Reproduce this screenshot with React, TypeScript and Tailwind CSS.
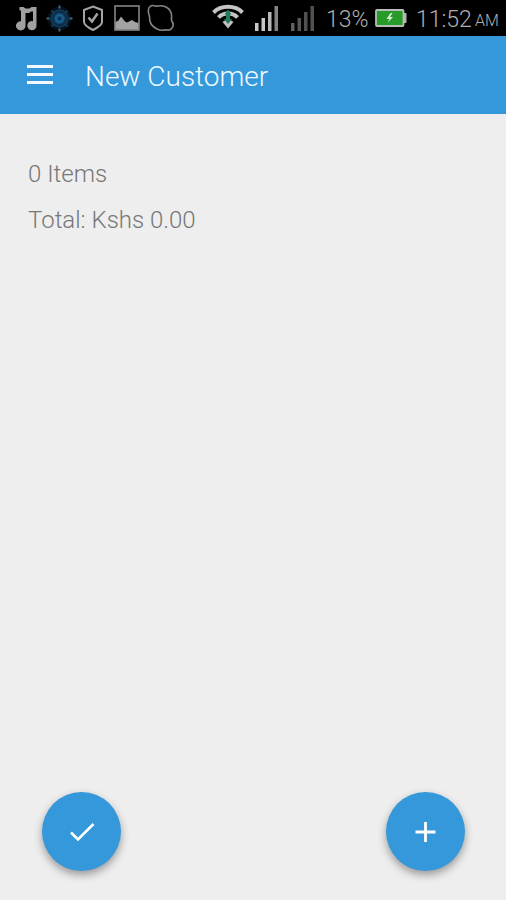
import type { ReactNode } from "react";

const MusicIcon = () => (
  <svg width="24" height="25" viewBox="0 0 24 25" fill="#a0a0a0">
    <path d="M5.500 1h4l2 1.500h4l2-1.500h5v18.500a4.600 4.600 0 1 1-3.500-4.300V5.500h-2l-2 1.500h-3.500v12.500A4.800 4.600 0 1 1 7 15.200V5L5.500 4z" />
  </svg>
);

const TargetIcon = () => (
  <svg width="27" height="27" viewBox="0 0 27 27" fill="none">
    <circle cx="13.500" cy="13.500" r="12" fill="#081018" />
    <circle cx="13.500" cy="13.500" r="8.500" fill="#0e2d47" stroke="#123a58" strokeWidth="1.500" />
    <circle cx="13.500" cy="13.500" r="5.500" fill="#124a76" />
    <circle cx="13.500" cy="13.500" r="3.500" stroke="#1d6294" strokeWidth="1.500" />
    <circle cx="13.500" cy="13.500" r="1.500" fill="#0c3152" />
    <path d="M13.500 .5v3M13.500 23.500v3M.5 13.500h3M23.500 13.500h3" stroke="#3a6a86" strokeWidth="2" />
    <path d="M5.500 5.500l2 2M21.500 5.500l-2 2M5.500 21.500l2-2M21.500 21.500l-2-2" stroke="#1b435f" strokeWidth="1.500" />
  </svg>
);

const ShieldIcon = () => (
  <svg width="22" height="26" viewBox="0 0 22 26" fill="none" stroke="#a4a4a4" strokeWidth="2">
    <path d="M11 1.500L20 5v12c0 3.500-5 6-9 8-4-2-9-4.500-9-8V5z" />
    <path d="M6.500 12.500l3.500 4 5.500-8" strokeWidth="2.500" />
  </svg>
);

const PictureIcon = () => (
  <svg width="26" height="26" viewBox="0 0 26 26">
    <rect x="1" y="1" width="24" height="24" fill="none" stroke="#858585" strokeWidth="1.600" />
    <path d="M1.500 24.500V17l3-1.500 2.500-4 4 5 2 1 5-2.500 3 2 3.500 1v6.500z" fill="#a2a2a2" />
  </svg>
);

const BlobIcon = () => (
  <svg width="28" height="28" viewBox="0 0 28 28" fill="none" stroke="#858585" strokeWidth="1.600">
    <path d="M3 2.500C5 .8 7 1.500 9 2.200c3-.7 7-.7 10 .8 4 2 6 6 5.500 11-.2 1.500 0 2.500.5 3.500 1.500 2 1.500 4.500 0 6.500s-4 2.500-6 1.800c-2.500.7-6 .7-9-.8C6 23 3.500 20 2.800 16.500c-.3-2 0-3.500-.5-5C1 8 .8 4.500 3 2.500z" />
  </svg>
);

const WifiIcon = () => (
  <svg width="32" height="25" viewBox="0 0 32 25" fill="none">
    <path d="M1.500 8.500Q7 2.800 16 2.800T30.500 8.500" stroke="#c4c4c4" strokeWidth="4" />
    <path d="M6.500 13.500Q10 9.500 16 9.500T25.500 13.500" stroke="#c4c4c4" strokeWidth="3.800" />
    <path d="M10.500 18Q16 13.500 21.500 18L16 24.500z" fill="#c0c0c0" />
    <path d="M16 5.500l3.500 5H18v4.500h2L16 20l-4-5h2v-4.500h-1.500z" fill="#1f7d59" />
  </svg>
);

const bars = [
  { x: 0, y: 17, h: 8 },
  { x: 6.5, y: 12, h: 13 },
  { x: 13, y: 6, h: 19 },
  { x: 19.5, y: 0, h: 25 },
];

const SignalIcon = ({ fills }: { fills: string[] }) => (
  <svg width="23" height="25" viewBox="0 0 23 25">
    {bars.map((bar, i) => (
      <rect key={bar.x} x={bar.x} y={bar.y} width="3.500" height={bar.h} fill={fills[i]} />
    ))}
  </svg>
);

const BatteryIcon = () => (
  <svg width="32" height="18" viewBox="0 0 32 18">
    <path d="M28 4h2.500q1 0 1 1v8q0 1-1 1H28z" fill="#b5b5b5" />
    <rect x="1" y="1" width="27.500" height="16" rx="1" fill="#279b28" stroke="#b9bdb9" strokeWidth="1.800" />
    <path d="M15.500 4l-4 6h3l-2 4 5.500-6h-3L17.500 4z" fill="#d2ebd2" />
  </svg>
);

const StatusBar = () => (
  <div className="flex h-9 items-center bg-black text-[#b0b0b0]">
    <div className="flex items-center pl-3.5">
      <MusicIcon />
      <div className="ml-2">
        <TargetIcon />
      </div>
      <div className="ml-[9px]">
        <ShieldIcon />
      </div>
      <div className="ml-2.5">
        <PictureIcon />
      </div>
      <div className="ml-[7px]">
        <BlobIcon />
      </div>
    </div>
    <div className="ml-[37px] flex items-center">
      <div className="-mt-1">
        <WifiIcon />
      </div>
      <div className="ml-[11px]">
        <SignalIcon fills={["#c8c8c8", "#c8c8c8", "#b8b8b8", "#858585"]} />
      </div>
      <div className="ml-[13px]">
        <SignalIcon fills={["#606060", "#555555", "#505050", "#505050"]} />
      </div>
      <span className="ml-3 w-[45px] pt-[3px] text-[23px] leading-9 font-light whitespace-nowrap">13%</span>
      <div className="ml-1">
        <BatteryIcon />
      </div>
      <span className="ml-[9px] w-[57px] pt-[3px] text-[23px] leading-9 font-light whitespace-nowrap">
        11:52
      </span>
      <span className="ml-0.5 pt-[5px] text-[16px] leading-8 font-light">AM</span>
    </div>
  </div>
);

const Fab = ({ label, children }: { label: string; children: ReactNode }) => (
  <button
    aria-label={label}
    className="flex size-[79px] items-center justify-center rounded-full bg-[#3498db] shadow-[0_4px_9px_rgba(0,0,0,0.36)]"
  >
    {children}
  </button>
);

const App = () => {
  return (
    <div className="flex h-[900px] w-[506px] flex-col overflow-hidden bg-[#eeeeee] font-['Roboto',sans-serif]">
      <StatusBar />

      {/* Toolbar */}
      <header className="flex h-[78px] items-center bg-[#3498db] pl-[27px]">
        <button aria-label="Menu" className="flex w-[26px] flex-col gap-[5px] pb-0.5">
          <span className="h-[3px] bg-[#f4faff]" />
          <span className="h-[3px] bg-[#f4faff]" />
          <span className="h-[3px] bg-[#f4faff]" />
        </button>
        <h1 className="ml-8 pt-1 text-[28px] leading-9 font-light whitespace-nowrap text-[#eff8ff]">
          New Customer
        </h1>
      </header>

      {/* Order summary */}
      <main className="flex-1 px-7 pt-[37px] text-[24px] leading-[46px] font-light text-[#777777]">
        <p>0 Items</p>
        <p>Total: Kshs 0.00</p>
      </main>

      {/* Actions */}
      <footer className="flex justify-between pr-[41px] pb-[29px] pl-[42px]">
        <Fab label="Done">
          <svg width="28" height="24" viewBox="0 0 28 24" fill="none" stroke="#fff" strokeWidth="2.600">
            <path d="M3 12.500l7 7L25.500 4" />
          </svg>
        </Fab>
        <Fab label="Add">
          <svg width="22" height="22" viewBox="0 0 22 22" fill="none" stroke="#fff" strokeWidth="2.800">
            <path d="M10.500 1v20M.5 11h20" />
          </svg>
        </Fab>
      </footer>
    </div>
  );
};

export default App;
